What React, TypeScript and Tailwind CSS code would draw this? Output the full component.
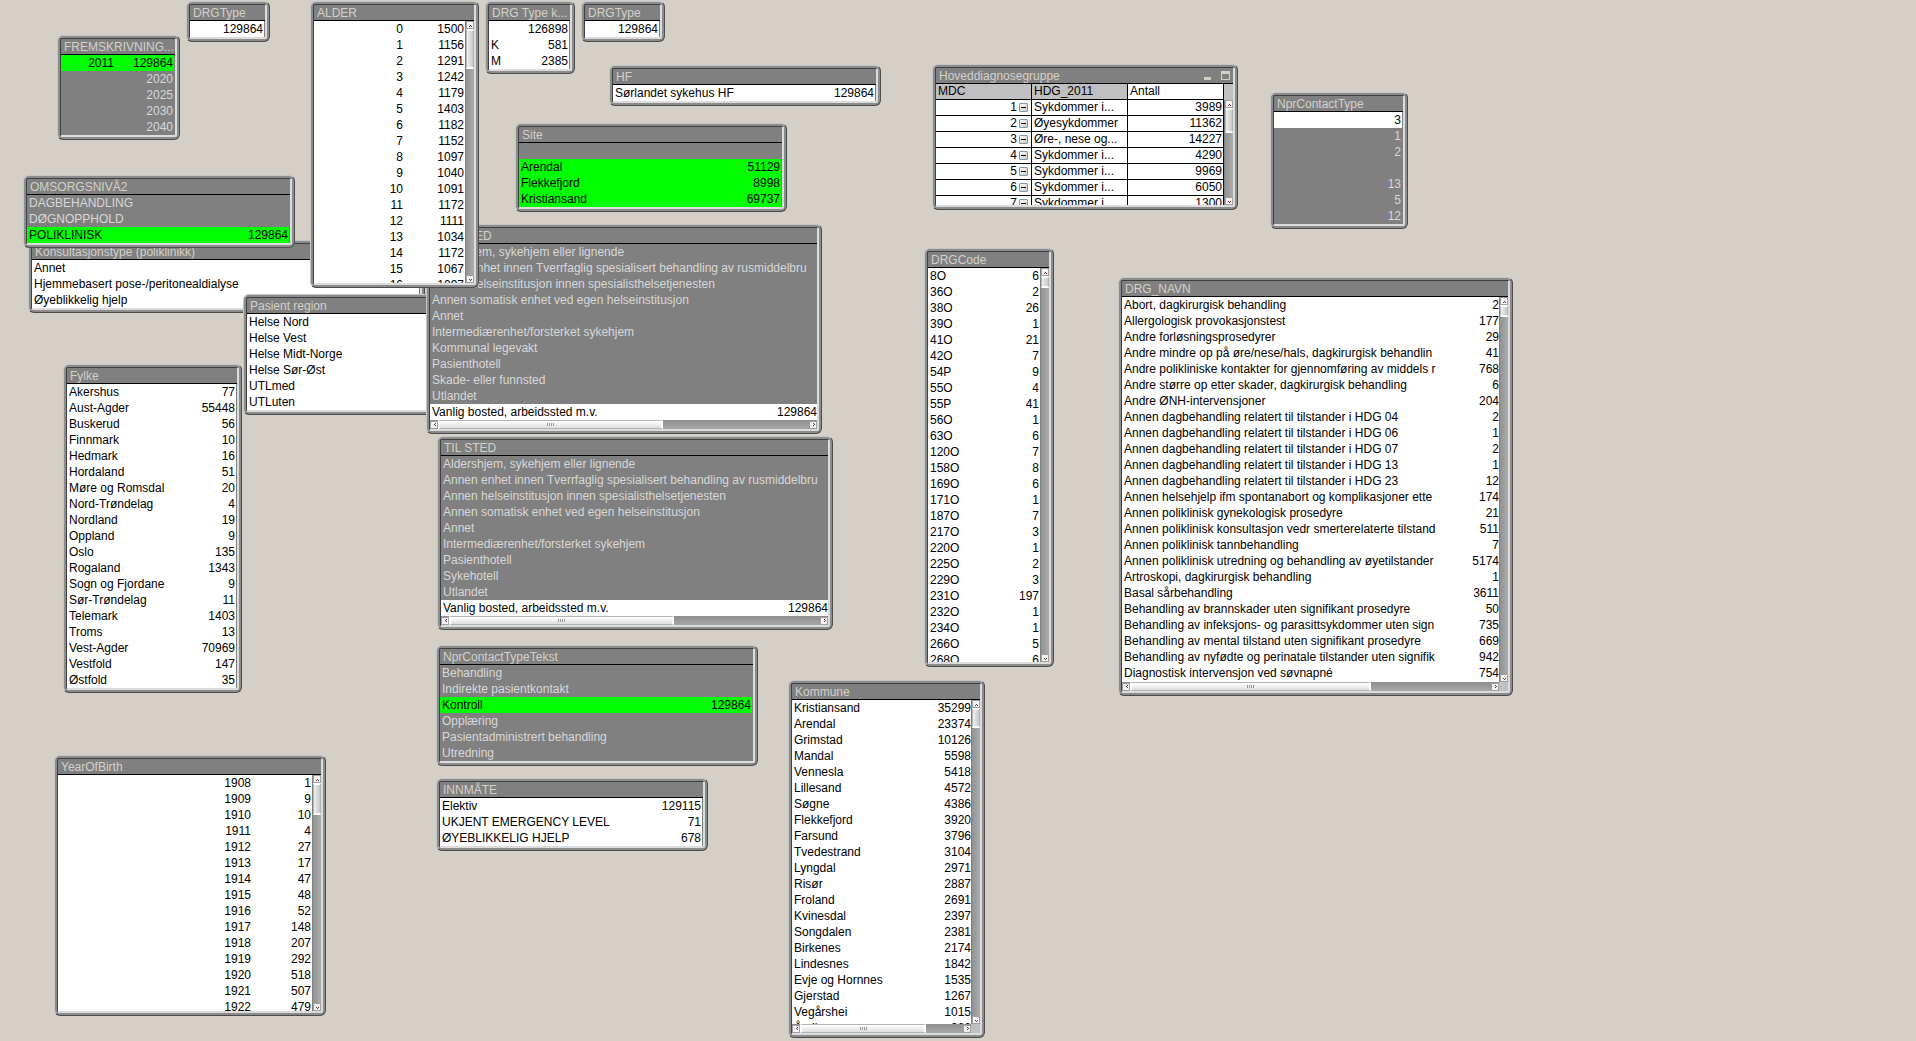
import React from 'react';
import clsx from 'clsx';

type RowState = 'optional' | 'selected' | 'excluded';

interface Row {
  label: string;
  count?: string;
  state?: RowState;
}

interface PanelProps {
  title: string;
  frame: string;
  children: React.ReactNode;
  controls?: React.ReactNode;
}

interface ListBoxProps {
  title: string;
  frame: string;
  rows: Row[];
  labelClass?: string;
  vThumb?: string;
  hThumb?: string;
}

// "label|count" lines to rows
const parse = (text: string, state: RowState = 'optional'): Row[] =>
  text
    .trim()
    .split('\n')
    .map((line) => {
      const [label, count] = line.split('|');
      return { label: label.trim(), count, state };
    });

const rowStyles: Record<RowState, string> = {
  optional: 'bg-white text-black',
  selected: 'bg-[#00ff00] text-black',
  excluded: 'bg-[#808080] text-[#d8d8d8]',
};

const arrowPaths = {
  up: 'M2 4h1V3h1v1h1v1H4V4H3v1H2z',
  down: 'M2 3h1v1h1V3h1v1H4v1H3V4H2z',
  left: 'M4 2v1H3v1h1v1h1V4H4V3h1V2z',
  right: 'M3 2v1h1v1H3v1h1V4h1V3H4V2z',
};

const ArrowButton: React.FC<{ direction: keyof typeof arrowPaths }> = ({ direction }) => (
  <button
    type="button"
    aria-label={`Scroll ${direction}`}
    className="flex h-2 w-2 shrink-0 items-center justify-center border border-[#a0a0a0] bg-[#f4f2f2]"
  >
    <svg viewBox="1 1 5 5" className="h-[5px] w-[5px] shrink-0" fill="#703030" shapeRendering="crispEdges">
      <path d={arrowPaths[direction]} />
    </svg>
  </button>
);

const VerticalScroll: React.FC<{ thumb: string }> = ({ thumb }) => (
  <div className="flex w-[9px] shrink-0 flex-col items-end border-l border-[#808080] bg-linear-to-r from-[#929292] to-[#acacac]">
    <ArrowButton direction="up" />
    <div
      className={clsx(
        'w-2 shrink-0 border-x border-y-2 border-x-[#b4b4b4] border-y-white bg-linear-to-r from-[#f0f0f0] to-[#c8c8c8]',
        thumb,
      )}
    />
    <div className="grow" />
    <ArrowButton direction="down" />
  </div>
);

const HorizontalScroll: React.FC<{ thumb: string; corner?: boolean }> = ({ thumb, corner }) => (
  <div className="flex h-[9px] shrink-0 items-center bg-linear-to-b from-[#8e8e8e] to-[#a8a8a8]">
    <ArrowButton direction="left" />
    <div
      className={clsx(
        'flex h-[9px] shrink-0 items-center justify-center gap-px border-x-2 border-y border-x-white border-y-[#b4b4b4] bg-linear-to-b from-white to-[#dedede]',
        thumb,
      )}
    >
      <span className="h-[3px] w-px bg-[#999999]" />
      <span className="h-[3px] w-px bg-[#999999]" />
      <span className="h-[3px] w-px bg-[#999999]" />
      <span className="h-[3px] w-px bg-[#999999]" />
    </div>
    <div className="grow" />
    <ArrowButton direction="right" />
    {corner && <div className="h-[9px] w-[9px] bg-[#c0c0c0]" />}
  </div>
);

const Panel: React.FC<PanelProps> = ({ title, frame, children, controls }) => (
  <section
    className={clsx(
      'absolute flex flex-col rounded-[6px] border border-t-[#c6c6c6] border-r-[#4c4c4c] border-b-[#4c4c4c] border-l-[#c6c6c6] bg-[#8c8c8c] p-0.5',
      frame,
    )}
  >
    <div className="flex min-h-0 grow flex-col rounded-xs border border-r-2 border-b-2 border-t-[#404040] border-r-[#dcdcdc] border-b-[#dcdcdc] border-l-[#404040] bg-[#808080]">
      <header className="flex h-4 shrink-0 items-start justify-between border-b border-black px-[3px] pt-px text-[#d4d0c8]">
        <h2 className="leading-[15px] whitespace-nowrap">{title}</h2>
        {controls}
      </header>
      {children}
    </div>
  </section>
);

const ListBox: React.FC<ListBoxProps> = ({ title, frame, rows, labelClass = 'grow', vThumb, hThumb }) => {
  const scrolls = vThumb || hThumb;

  return (
    <Panel title={title} frame={frame}>
      <div className={clsx('flex min-h-0 grow', !scrolls && 'pr-px')}>
        <ul className="min-w-0 grow overflow-hidden bg-white">
          {rows.map((row, index) => (
            <li
              key={index}
              className={clsx(
                'flex h-4 justify-between overflow-hidden pl-0.5 leading-4 whitespace-nowrap',
                !hThumb && 'pr-px',
                rowStyles[row.state ?? 'optional'],
              )}
            >
              <span className={clsx('overflow-hidden', labelClass)}>{row.label}</span>
              {row.count && <span className="shrink-0">{row.count}</span>}
            </li>
          ))}
        </ul>
        {vThumb && <VerticalScroll thumb={vThumb} />}
      </div>
      {hThumb && <HorizontalScroll thumb={hThumb} corner={Boolean(vThumb)} />}
    </Panel>
  );
};

const years = parse(`2011|129864`, 'selected').concat(parse('2020\n2025\n2030\n2040', 'excluded'));

const ages = parse(`
0|1500
1|1156
2|1291
3|1242
4|1179
5|1403
6|1182
7|1152
8|1097
9|1040
10|1091
11|1172
12|1111
13|1034
14|1172
15|1067
16|1097`);

const careLevels = parse('DAGBEHANDLING\nDØGNOPPHOLD', 'excluded').concat(
  parse('POLIKLINISK|129864', 'selected'),
);

const sites: Row[] = [
  { label: '', state: 'excluded' },
  ...parse('Arendal|51129\nFlekkefjord|8998\nKristiansand|69737', 'selected'),
];

const fromPlaces = parse(
  `
Aldershjem, sykehjem eller lignende
Annen enhet innen Tverrfaglig spesialisert behandling av rusmiddelbru
Annen helseinstitusjon innen spesialisthelsetjenesten
Annen somatisk enhet ved egen helseinstitusjon
Annet
Intermediærenhet/forsterket sykehjem
Kommunal legevakt
Pasienthotell
Skade- eller funnsted
Utlandet`,
  'excluded',
).concat(parse('Vanlig bosted, arbeidssted m.v.|129864'));

const toPlaces = parse(
  `
Aldershjem, sykehjem eller lignende
Annen enhet innen Tverrfaglig spesialisert behandling av rusmiddelbru
Annen helseinstitusjon innen spesialisthelsetjenesten
Annen somatisk enhet ved egen helseinstitusjon
Annet
Intermediærenhet/forsterket sykehjem
Pasienthotell
Sykehotell
Utlandet`,
  'excluded',
).concat(parse('Vanlig bosted, arbeidssted m.v.|129864'));

const contactTexts = parse('Behandling\nIndirekte pasientkontakt', 'excluded').concat(
  parse('Kontroll|129864', 'selected'),
  parse('Opplæring\nPasientadministrert behandling\nUtredning', 'excluded'),
);

const contactTypes: Row[] = [
  { label: '3' },
  ...['1', '2', '', '13', '5', '12'].map((label): Row => ({ label, state: 'excluded' })),
];

const counties = parse(`
Akershus|77
Aust-Agder|55448
Buskerud|56
Finnmark|10
Hedmark|16
Hordaland|51
Møre og Romsdal|20
Nord-Trøndelag|4
Nordland|19
Oppland|9
Oslo|135
Rogaland|1343
Sogn og Fjordane|9
Sør-Trøndelag|11
Telemark|1403
Troms|13
Vest-Agder|70969
Vestfold|147
Østfold|35`);

const birthYears = parse(`
1908|1
1909|9
1910|10
1911|4
1912|27
1913|17
1914|47
1915|48
1916|52
1917|148
1918|207
1919|292
1920|518
1921|507
1922|479`);

const municipalities = parse(`
Kristiansand|35299
Arendal|23374
Grimstad|10126
Mandal|5598
Vennesla|5418
Lillesand|4572
Søgne|4386
Flekkefjord|3920
Farsund|3796
Tvedestrand|3104
Lyngdal|2971
Risør|2887
Froland|2691
Kvinesdal|2397
Songdalen|2381
Birkenes|2174
Lindesnes|1842
Evje og Hornnes|1535
Gjerstad|1267
Vegårshei|1015
Åmli|986`);

const drgCodes = parse(`
8O|6
36O|2
38O|26
39O|1
41O|21
42O|7
54P|9
55O|4
55P|41
56O|1
63O|6
120O|7
158O|8
169O|6
171O|1
187O|7
217O|3
220O|1
225O|2
229O|3
231O|197
232O|1
234O|1
266O|5
268O|6`);

const drgNames = parse(`
Abort, dagkirurgisk behandling|2
Allergologisk provokasjonstest|177
Andre forløsningsprosedyrer|29
Andre mindre op på øre/nese/hals, dagkirurgisk behandlin|41
Andre polikliniske kontakter for gjennomføring av middels r|768
Andre større op etter skader, dagkirurgisk behandling|6
Andre ØNH-intervensjoner|204
Annen dagbehandling relatert til tilstander i HDG 04|2
Annen dagbehandling relatert til tilstander i HDG 06|1
Annen dagbehandling relatert til tilstander i HDG 07|2
Annen dagbehandling relatert til tilstander i HDG 13|1
Annen dagbehandling relatert til tilstander i HDG 23|12
Annen helsehjelp ifm spontanabort og komplikasjoner ette|174
Annen poliklinisk gynekologisk prosedyre|21
Annen poliklinisk konsultasjon vedr smerterelaterte tilstand|511
Annen poliklinisk tannbehandling|7
Annen poliklinisk utredning og behandling av øyetilstander|5174
Artroskopi, dagkirurgisk behandling|1
Basal sårbehandling|3611
Behandling av brannskader uten signifikant prosedyre|50
Behandling av infeksjons- og parasittsykdommer uten sign|735
Behandling av mental tilstand uten signifikant prosedyre|669
Behandling av nyfødte og perinatale tilstander uten signifik|942
Diagnostisk intervensjon ved søvnapné|754`);

const diagnosisGroups = [
  { mdc: 1, name: 'Sykdommer i...', count: 3989 },
  { mdc: 2, name: 'Øyesykdommer', count: 11362 },
  { mdc: 3, name: 'Øre-, nese og...', count: 14227 },
  { mdc: 4, name: 'Sykdommer i...', count: 4290 },
  { mdc: 5, name: 'Sykdommer i...', count: 9969 },
  { mdc: 6, name: 'Sykdommer i...', count: 6050 },
  { mdc: 7, name: 'Sykdommer i...', count: 1300 },
];

const DiagnosisTable: React.FC = () => (
  <Panel
    title="Hoveddiagnosegruppe"
    frame="left-[932px] top-[64px] w-[306px] h-[146px]"
    controls={
      <div className="mt-0.5 flex h-[9px] items-end gap-[10px]">
        <button type="button" aria-label="Minimize" className="h-[3px] w-[7px] bg-[#d4d0c8]" />
        <button type="button" aria-label="Maximize" className="h-[9px] w-[9px] border border-t-3 border-[#d4d0c8]" />
      </div>
    }
  >
    <div className="flex min-h-0 grow">
      <div className="min-w-0 grow overflow-hidden bg-white">
        <table className="w-full table-fixed border-separate border-spacing-0 text-black">
          <thead>
            <tr className="text-left leading-[15px]">
              <th className="h-4 border-r border-b border-black bg-[#c0c0c0] py-0 pl-0.5 font-normal">MDC</th>
              <th className="h-4 border-r border-b border-black bg-[#c0c0c0] py-0 pl-0.5 font-normal">HDG_2011</th>
              <th className="h-4 border-r border-b border-black py-0 pl-0.5 font-normal">Antall</th>
            </tr>
          </thead>
          <tbody>
            {diagnosisGroups.map((group) => (
              <tr key={group.mdc} className="leading-[15px]">
                <td className="h-4 border-r border-b border-black p-0">
                  <div className="flex items-center justify-end gap-0.5 pr-[3px]">
                    {group.mdc}
                    <button
                      type="button"
                      aria-label="Collapse"
                      className="flex h-[9px] w-[9px] items-center justify-center rounded-[1px] border border-[#7898b5] bg-linear-to-br from-white to-[#d0c8bc]"
                    >
                      <span className="h-px w-[5px] bg-black" />
                    </button>
                  </div>
                </td>
                <td className="h-4 border-r border-b border-black py-0 pl-0.5 whitespace-nowrap">{group.name}</td>
                <td className="h-4 border-r border-b border-black py-0 pr-px text-right">{group.count}</td>
              </tr>
            ))}
          </tbody>
        </table>
      </div>
      <div className="flex flex-col bg-[#c0c0c0] pt-4">
        <div className="flex min-h-0 grow">
          <VerticalScroll thumb="h-[25px]" />
        </div>
      </div>
    </div>
  </Panel>
);

export default function App() {
  return (
    <main className="relative min-h-screen w-full overflow-hidden bg-[#d4d0c8] font-['Liberation_Sans',Arial,sans-serif] text-xs">
      <ListBox title="DRGType" frame="left-[186px] top-[1px] w-[84px]" rows={parse('|129864')} />
      <ListBox title="FREMSKRIVNING..." frame="left-[57px] top-[35px] w-[123px]" rows={years} labelClass="min-w-[51px] text-right last:grow" />
      <ListBox
        title="Konsultasjonstype (poliklinikk)"
        frame="left-[28px] top-[240px] w-[397px]"
        rows={parse('Annet\nHjemmebasert pose-/peritonealdialyse\nØyeblikkelig hjelp')}
      />
      <ListBox
        title="Pasient region"
        frame="left-[243px] top-[294px] w-[272px]"
        rows={parse('Helse Nord\nHelse Vest\nHelse Midt-Norge\nHelse Sør-Øst\nUTLmed\nUTLuten')}
      />
      <ListBox title="FRA STED" frame="left-[426px] top-[224px] w-[396px]" rows={fromPlaces} hThumb="w-[225px]" />
      <ListBox
        title="ALDER"
        frame="left-[310px] top-[1px] w-[169px] h-[287px]"
        rows={ages}
        labelClass="w-[87px] text-right"
        vThumb="h-[40px]"
      />
      <ListBox title="OMSORGSNIVÅ2" frame="left-[23px] top-[175px] w-[272px]" rows={careLevels} />
      <ListBox title="DRG Type k..." frame="left-[485px] top-[1px] w-[90px]" rows={parse('|126898\nK|581\nM|2385')} />
      <ListBox title="DRGType" frame="left-[581px] top-[1px] w-[84px]" rows={parse('|129864')} />
      <ListBox title="HF" frame="left-[609px] top-[65px] w-[272px]" rows={parse('Sørlandet sykehus HF|129864')} />
      <ListBox title="Site" frame="left-[515px] top-[123px] w-[272px]" rows={sites} />
      <DiagnosisTable />
      <ListBox
        title="NprContactType"
        frame="left-[1270px] top-[92px] w-[138px]"
        rows={contactTypes}
        labelClass="grow text-right"
      />
      <ListBox title="Fylke" frame="left-[63px] top-[364px] w-[179px]" rows={counties} />
      <ListBox title="TIL STED" frame="left-[437px] top-[436px] w-[396px]" rows={toPlaces} hThumb="w-[225px]" />
      <ListBox title="NprContactTypeTekst" frame="left-[436px] top-[645px] w-[322px]" rows={contactTexts} />
      <ListBox
        title="INNMÅTE"
        frame="left-[436px] top-[778px] w-[272px]"
        rows={parse('Elektiv|129115\nUKJENT EMERGENCY LEVEL|71\nØYEBLIKKELIG HJELP|678')}
      />
      <ListBox
        title="YearOfBirth"
        frame="left-[54px] top-[755px] w-[272px] h-[261px]"
        rows={birthYears}
        labelClass="w-[191px] text-right"
        vThumb="h-[32px]"
      />
      <ListBox
        title="Kommune"
        frame="left-[788px] top-[680px] w-[197px] h-[358px]"
        rows={municipalities}
        vThumb="h-[20px]"
        hThumb="w-[126px]"
      />
      <ListBox title="DRGCode" frame="left-[924px] top-[248px] w-[130px] h-[419px]" rows={drgCodes} vThumb="h-[12px]" />
      <ListBox
        title="DRG_NAVN"
        frame="left-[1118px] top-[277px] w-[395px] h-[419px]"
        rows={drgNames}
        labelClass="w-[318px]"
        vThumb="h-[12px]"
        hThumb="w-[241px]"
      />
    </main>
  );
}
